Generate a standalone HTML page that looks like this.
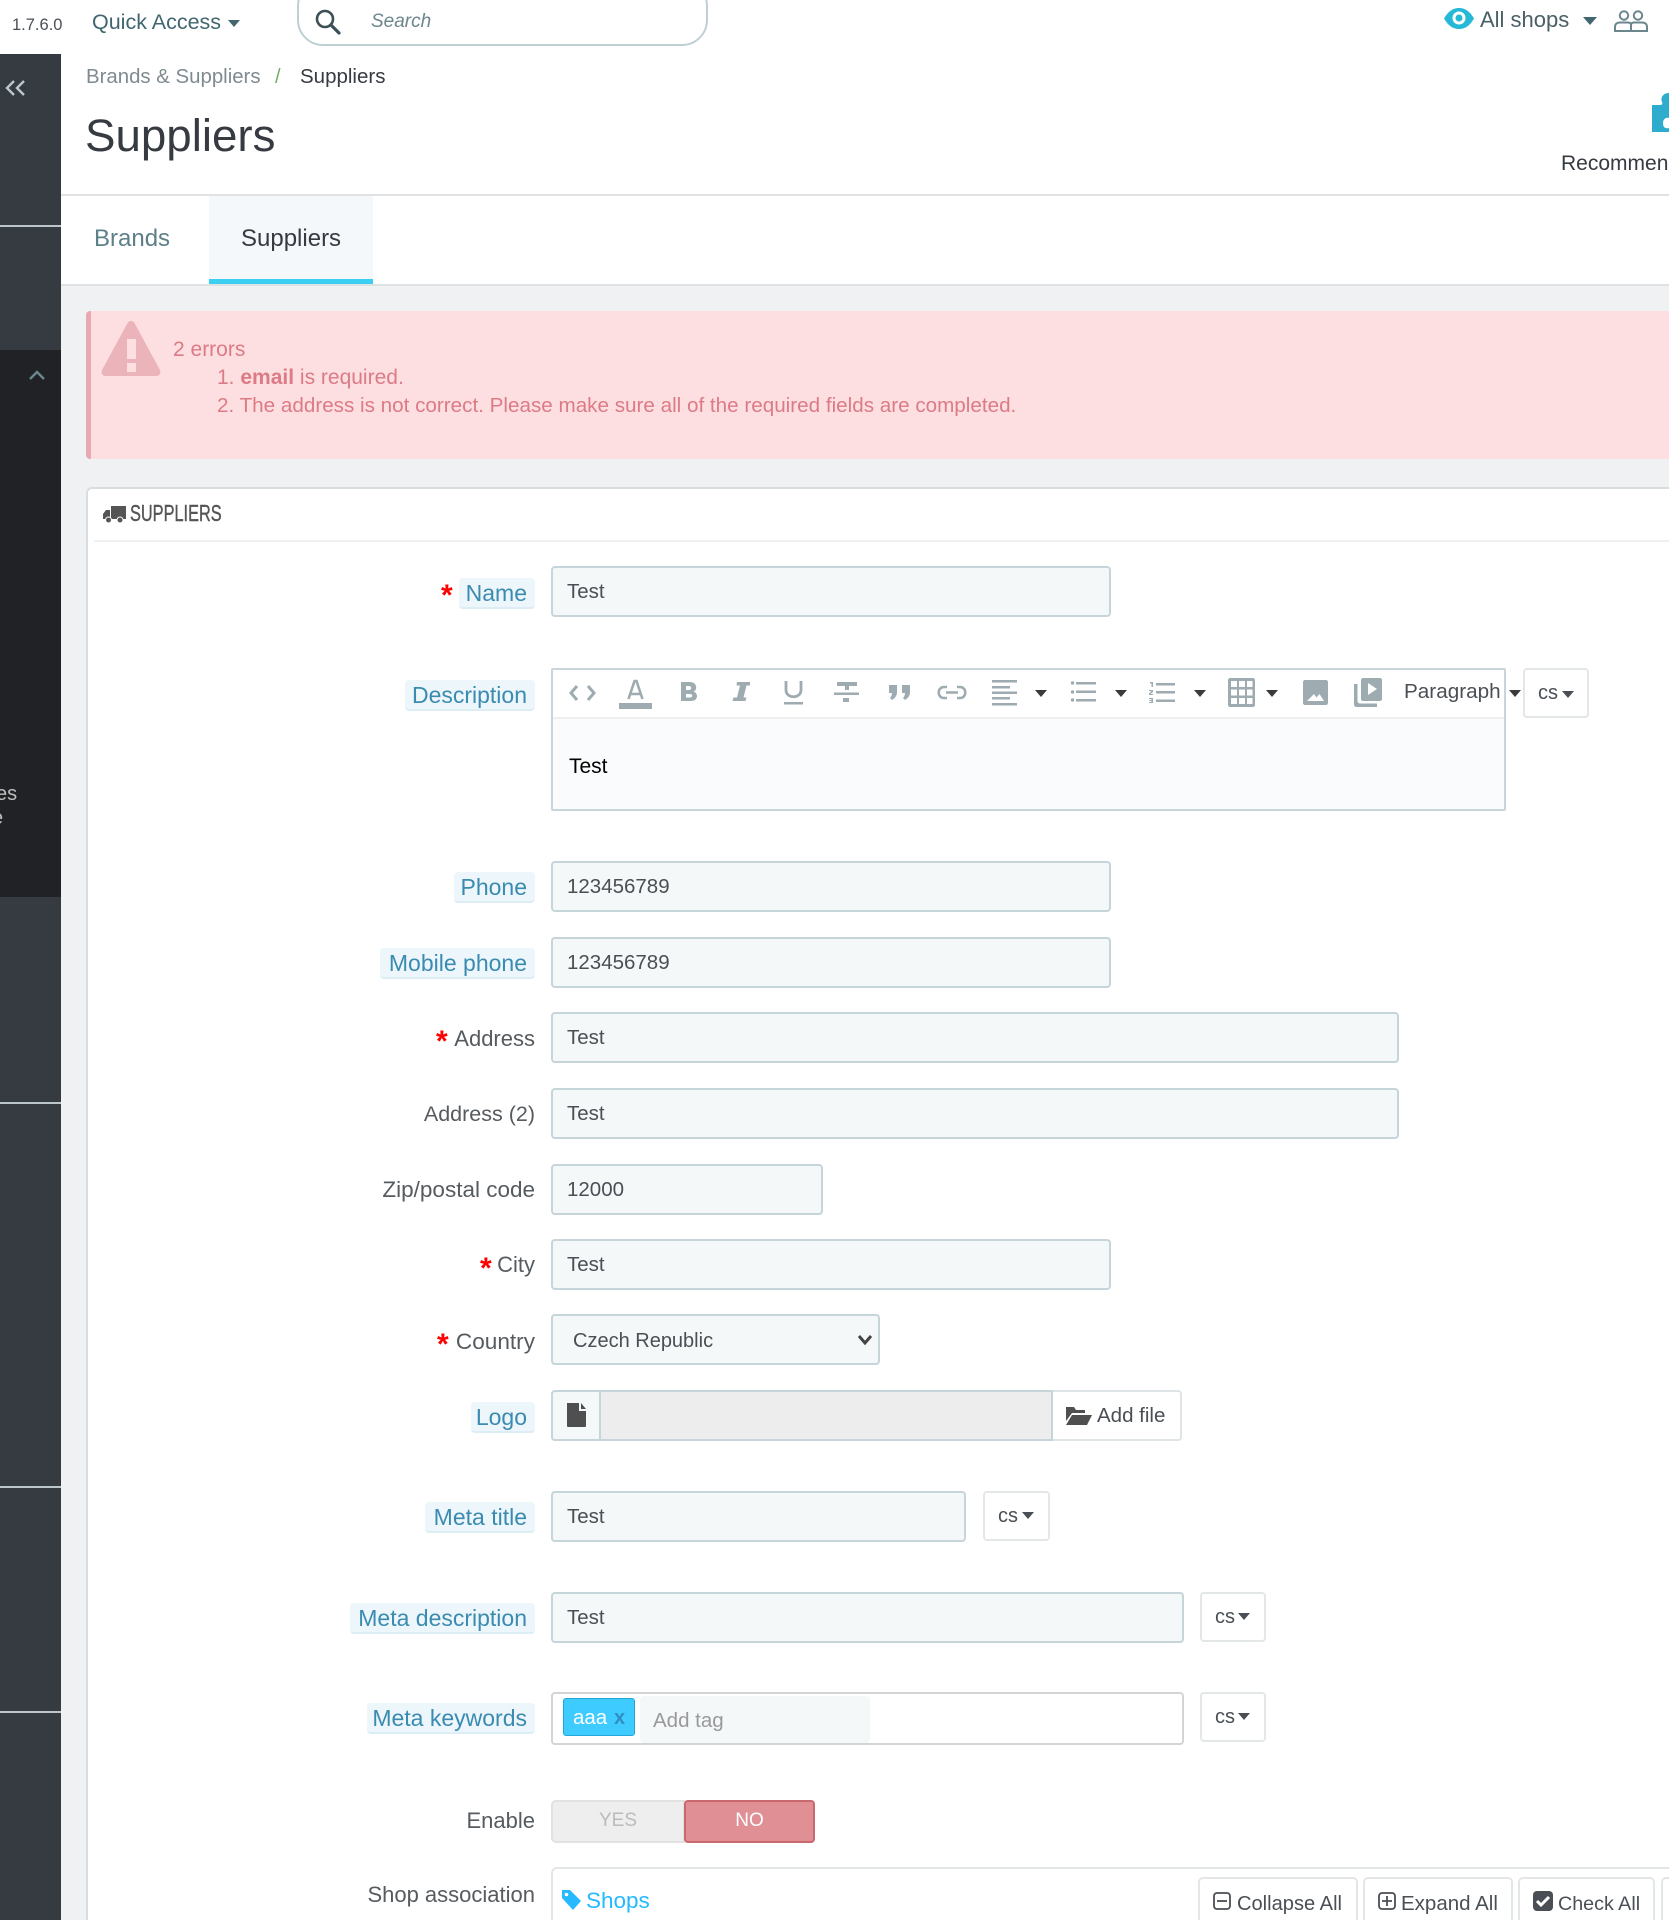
<!DOCTYPE html>
<html><head><meta charset="utf-8"><title>Suppliers</title>
<style>
html,body{margin:0;padding:0;background:#fff;width:1669px;height:1920px;overflow:hidden}
body{font-family:"Liberation Sans",sans-serif;color:#363a41}
#w{position:absolute;left:0;top:0;width:1669px;height:1920px;overflow:hidden;background:#fff}
#w div,svg.a{position:absolute;box-sizing:border-box}
#w .t{position:absolute;white-space:nowrap;line-height:30px;height:30px}
#w .inp{background:#f5f8f9;border:2px solid #c6d5da;border-radius:4px;font-size:20.5px;color:#4a4f55;padding-left:14px;line-height:48px;height:51px;white-space:nowrap}
#w .pill{background:#ecf6fb;border-bottom:2px solid #dcedf5;border-radius:4px;height:31px;line-height:30px;font-size:23px;color:#3b8bb1;text-align:right;padding-right:8px;white-space:nowrap}
#w .lab{right:1134px;font-size:22px;color:#565b60;line-height:30px;height:30px;white-space:nowrap}
#w .star{color:#f00;font-size:30px;font-weight:bold;line-height:30px;height:30px}
#w .cs{background:#fff;border:2px solid #e4e7e8;border-radius:4px;height:50px;font-size:20px;color:#4a4f55;line-height:46px;white-space:nowrap}
#w .car{width:0;height:0;border-left:6.5px solid transparent;border-right:6.5px solid transparent;border-top:7px solid #4a4f55}
#w .sl{left:0;width:61px;height:2px;background:#bcc6ca}
#w .btn{background:#fff;border:2px solid #e3e6e7;border-radius:5px;top:1877px;height:60px;font-size:20.1px;color:#4a4f55;line-height:50px;white-space:nowrap}
</style></head><body><div id="w">

<!-- top bar -->
<div class="t" style="left:12px;top:10px;font-size:16.5px;color:#4a4f55">1.7.6.0</div>
<div class="t" style="left:92px;top:7px;font-size:21.5px;color:#41666f">Quick Access</div>
<div class="car" style="left:228px;top:20px;border-top-color:#41666f"></div>
<div style="left:297px;top:-20px;width:411px;height:66px;border:2px solid #bfd0d5;border-radius:26px;background:#fff"></div>
<svg class="a" style="left:313px;top:8px" width="28" height="28" viewBox="0 0 28 28"><circle cx="12" cy="11" r="8" fill="none" stroke="#3d5057" stroke-width="2.6"/><path d="M18 17l8 8" stroke="#3d5057" stroke-width="3.2" stroke-linecap="round"/></svg>
<div class="t" style="left:371px;top:7px;font-size:19px;font-style:italic;color:#6c868e">Search</div>

<svg class="a" style="left:1443px;top:7px" width="32" height="23" viewBox="0 0 32 23"><path d="M1 11.5C6 3 11 1 16 1s10 2 15 10.500C26 20 21 22 16 22S6 20 1 11.500z" fill="#25b9d7"/><circle cx="16" cy="11" r="6.500" fill="#fff"/><circle cx="16" cy="11" r="3.500" fill="#25b9d7"/></svg>
<div class="t" style="left:1480px;top:5px;font-size:22px;color:#4a5f66">All shops</div>
<div class="car" style="left:1583px;top:17px;border-left-width:7px;border-right-width:7px;border-top-width:8px;border-top-color:#41666f"></div>
<svg class="a" style="left:1613px;top:9px" width="36" height="24" viewBox="0 0 36 24" fill="none" stroke="#6c868e" stroke-width="2"><circle cx="11" cy="6.500" r="4.200"/><circle cx="25" cy="6.500" r="4.200"/><path d="M2 22v-4c0-3 2-4.500 5-4.500h8c2 0 3 1 3 2.500 0-1.500 1-2.500 3-2.500h8c3 0 5 1.500 5 4.500v4zM18 16v6"/></svg>

<!-- sidebar -->
<div style="left:0;top:54px;width:61px;height:1866px;background:#363a41"></div>
<div style="left:0;top:350px;width:61px;height:547px;background:#202226"></div>
<div class="sl" style="top:225px"></div>
<div class="sl" style="top:1102px"></div>
<div class="sl" style="top:1486px"></div>
<div class="sl" style="top:1711px"></div>
<svg class="a" style="left:3px;top:78px" width="24" height="20" viewBox="0 0 24 20" fill="none" stroke="#bcc8cc" stroke-width="2.4"><path d="M11 3l-7 7 7 7M21 3l-7 7 7 7"/></svg>
<svg class="a" style="left:28px;top:368px" width="18" height="14" viewBox="0 0 18 14" fill="none" stroke="#6c868e" stroke-width="2.4"><path d="M2 11l7-7 7 7"/></svg>
<div class="t" style="left:-4px;top:779px;font-size:20px;color:#bebebe">es</div>
<div class="t" style="left:-8px;top:803px;font-size:20px;color:#bebebe">e</div>

<!-- header -->
<div class="t" style="left:86px;top:62px;font-size:20.4px;color:#7f8b90">Brands &amp; Suppliers</div>
<div class="t" style="left:275px;top:62px;font-size:20px;color:#70b060">/</div>
<div class="t" style="left:300px;top:62px;font-size:20.5px;color:#363a41">Suppliers</div>
<div class="t" style="left:85px;top:116px;font-size:45.7px;line-height:40px;height:40px;color:#363a41">Suppliers</div>
<svg class="a" style="left:1652px;top:91px" width="17" height="42" viewBox="0 0 17 42"><path d="M0 14H8C10 14 11 13 10 11C8 7 11 2 17 2V27C13 26 11 29 11 32C11 36 13 38 17 37V41H0Z" fill="#2eacce"/></svg>
<div class="t" style="left:1561px;top:149px;font-size:21px;color:#363a41">Recommended</div>
<div style="left:61px;top:194px;width:1608px;height:2px;background:#dfe1e2"></div>

<!-- tabs -->
<div style="left:209px;top:196px;width:164px;height:88px;background:#f4f8fb;border-bottom:5px solid #3bd0f2"></div>
<div class="t" style="left:94px;top:224px;font-size:24px;color:#5d8088">Brands</div>
<div class="t" style="left:241px;top:224px;font-size:24px;color:#363a41">Suppliers</div>

<!-- content bg -->
<div style="left:61px;top:284px;width:1608px;height:1636px;background:#eff1f2;border-top:2px solid #dfe1e2"></div>

<!-- alert -->
<div style="left:86px;top:311px;width:1600px;height:148px;background:#fddfe2;border-left:5px solid #e8aab0;border-radius:4px"></div>
<svg class="a" style="left:101px;top:320px" width="60" height="57" viewBox="0 0 60 57"><path d="M30 1C32 1 33 2 34 4L59 50c1 3 0 6-4 6H5c-4 0-5-3-4-6L26 4c1-2 2-3 4-3z" fill="#ebb4ba"/><rect x="26" y="19" width="9" height="20" fill="#fddfe2"/><rect x="26" y="43" width="9" height="9" fill="#fddfe2"/></svg>
<div class="t" style="left:173px;top:335px;font-size:21px;color:#dc7b85">2 errors</div>
<div class="t" style="left:217px;top:363px;font-size:21px;color:#dc7b85">1. <b>email</b> is required.</div>
<div class="t" style="left:217px;top:391px;font-size:20.65px;color:#dc7b85">2. The address is not correct. Please make sure all of the required fields are completed.</div>

<!-- panel -->
<div style="left:86px;top:487px;width:1600px;height:1460px;background:#fff;border:2px solid #d8dee0;border-radius:6px"></div>
<div style="left:94px;top:540px;width:1575px;height:2px;background:#eef0f1"></div>
<svg class="a" style="left:103px;top:505px" width="23" height="19" viewBox="0 0 23 19" fill="#555"><path d="M8 1h15v13H8zM7 5v9H0V9l3-4z"/><circle cx="5.500" cy="15" r="3" stroke="#fff"/><circle cx="17" cy="15" r="3" stroke="#fff"/></svg>
<div class="t" style="left:130px;top:498px;font-size:23px;color:#555;-webkit-text-stroke:.4px #555;transform:scaleX(.71);transform-origin:0 0">SUPPLIERS</div>

<!-- Name -->
<div class="star" style="left:441px;top:581px">*</div>
<div class="pill" style="left:459px;top:578px;width:76px">Name</div>
<div class="inp" style="left:551px;top:566px;width:560px">Test</div>

<!-- Description -->
<div class="pill" style="left:405px;top:680px;width:130px">Description</div>
<div style="left:551px;top:668px;width:955px;height:143px;background:#f9fbfc;border:2px solid #c8d6db;border-radius:2px"></div>
<div style="left:553px;top:670px;width:951px;height:49px;background:#fff;border-bottom:2px solid #eceeef"></div>
<svg class="a" style="left:553px;top:670px" width="970" height="48" viewBox="553 670 970 48" fill="#9eabb0" stroke="none">
 <path d="M577 686l-6 7 6 7M588 686l6 7-6 7" fill="none" stroke="#9eabb0" stroke-width="3"/>
 <path d="M628.500 699l6-18h2l6 18M631 694h9" fill="none" stroke="#9eabb0" stroke-width="2.600"/><rect x="619" y="703" width="33" height="6"/>
 <path d="M681 682h9c7 0 8 8 3.500 9.500 5 1.500 5 9.500-2.500 9.500h-10zM686 686v4h3c3 0 3-4 0-4zM686 694v3.500h4c3 0 3-3.500 0-3.500z" fill-rule="evenodd"/>
 <path d="M737 682h13v3.500h-3.500l-3 12h3l-1 3.500h-13l1-3.500h3.500l3-12h-3.500z"/>
 <path d="M786 681v9c0 9 15 9 15 0v-9" fill="none" stroke="#9eabb0" stroke-width="2.800"/><rect x="784" y="702" width="19" height="2.500"/>
 <path d="M837 682h20v4h-8v4h-4v-4h-8zM834 692.500h25v2.500h-25zM843 698h6v4h-6z"/>
 <path d="M889 685h8v7c0 4-2 6-5 8l-2-2c1-1 2-3 2-5h-3zM902 685h8v7c0 4-2 6-5 8l-2-2c1-1 2-3 2-5h-3z"/>
 <path d="M947 687h-3c-7 0-7 11 0 11h3M957 687h3c7 0 7 11 0 11h-3M946 692.500h12" fill="none" stroke="#9eabb0" stroke-width="2.600"/>
 <path d="M992 680h25v2.500h-25zM992 686h18v2.500h-18zM992 691.500h25v2.500h-25zM992 697h18v2.500h-18zM992 703h25v2.500h-25z"/>
 <path d="M1076 682h20v2.500h-20zM1076 690.500h20v2.500h-20zM1076 699h20v2.500h-20z"/><circle cx="1072.500" cy="683" r="1.700"/><circle cx="1072.500" cy="692" r="1.700"/><circle cx="1072.500" cy="700" r="1.700"/>
 <path d="M1156 683h19v2.500h-19zM1156 691h19v2.500h-19zM1156 699.500h19v2.500h-19zM1150 682h3v5h-1.500v-3.500h-1.500zM1149 690h4v2l-2.500 2h2.500v1h-4v-1.500l2.500-2.500h-2.500zM1149 698h4v5h-4v-1h2.500v-1h-2v-1h2v-1h-2.500z"/>
 <path fill-rule="evenodd" d="M1230 678h23c1 0 2 1 2 2v25c0 1-1 2-2 2h-23c-1 0-2-1-2-2v-25c0-1 1-2 2-2zM1231 681v6h6v-6zM1239 681v6h6v-6zM1247 681v6h5.500v-6zM1231 689.500v6h6v-6zM1239 689.500v6h6v-6zM1247 689.500v6h5.500v-6zM1231 698v6h6v-6zM1239 698v6h6v-6zM1247 698v6h5.500v-6z"/>
 <path fill-rule="evenodd" d="M1305 680h21c1 0 2 1 2 2v21c0 1-1 2-2 2h-21c-1 0-2-1-2-2v-21c0-1 1-2 2-2zM1307 701h17l-4.500-7-3 3.500-2.500-3.500z"/>
 <path fill-rule="evenodd" d="M1363 678h17c1 0 2 1 2 2v19c0 1-1 2-2 2h-17c-1 0-2-1-2-2v-19c0-1 1-2 2-2zM1368 683v12l9-6z"/>
 <path d="M1354 684h3.500v17c0 1 1 2.500 2.500 2.500h17v3.500h-20c-2 0-3-1-3-3z"/>
</svg>
<div class="car" style="left:1035px;top:690px;border-top-color:#3a3a3a"></div>
<div class="car" style="left:1114.500px;top:690px;border-top-color:#3a3a3a"></div>
<div class="car" style="left:1193.500px;top:690px;border-top-color:#3a3a3a"></div>
<div class="car" style="left:1266px;top:690px;border-top-color:#3a3a3a"></div>
<div class="t" style="left:1404px;top:677px;font-size:20.7px;color:#4a4f55">Paragraph</div>
<div class="car" style="left:1509px;top:690px;border-top-color:#3a3a3a"></div>
<div class="cs" style="left:1523px;top:668px;width:66px;padding-left:13px">cs</div>
<div class="car" style="left:1562px;top:691px"></div>
<div class="t" style="left:569px;top:752px;font-size:21px;color:#000">Test</div>

<!-- Phone -->
<div class="pill" style="left:454px;top:872px;width:81px">Phone</div>
<div class="inp" style="left:551px;top:861px;width:560px">123456789</div>
<div class="pill" style="left:380px;top:948px;width:155px">Mobile phone</div>
<div class="inp" style="left:551px;top:937px;width:560px">123456789</div>

<!-- Address -->
<div class="star" style="left:436px;top:1027px">*</div>
<div class="lab" style="top:1024px">Address</div>
<div class="inp" style="left:551px;top:1012px;width:848px">Test</div>
<div class="lab" style="top:1099px;font-size:21.5px">Address (2)</div>
<div class="inp" style="left:551px;top:1088px;width:848px">Test</div>
<div class="lab" style="top:1175px;font-size:22.5px">Zip/postal code</div>
<div class="inp" style="left:551px;top:1164px;width:272px">12000</div>
<div class="star" style="left:480px;top:1254px">*</div>
<div class="lab" style="top:1250px">City</div>
<div class="inp" style="left:551px;top:1239px;width:560px">Test</div>

<!-- Country -->
<div class="star" style="left:437px;top:1330px">*</div>
<div class="lab" style="top:1327px;font-size:22.6px">Country</div>
<div class="inp" style="left:551px;top:1314px;width:329px;padding-left:20px;line-height:51px;font-size:20px">Czech Republic</div>
<svg class="a" style="left:857px;top:1334px" width="16" height="12" viewBox="0 0 16 12" fill="none" stroke="#444" stroke-width="3"><path d="M2 2l6 7 6-7"/></svg>

<!-- Logo -->
<div class="pill" style="left:471px;top:1402px;width:64px">Logo</div>
<div style="left:551px;top:1390px;width:631px;height:51px;background:#fff;border:2px solid #dfe4e6;border-radius:4px"></div>
<div style="left:551px;top:1390px;width:50px;height:51px;background:#f5f8f9;border:2px solid #c6d5da;border-radius:4px 0 0 4px"></div>
<div style="left:600px;top:1390px;width:453px;height:51px;background:#ededed;border:2px solid #c6d5da;border-left-width:1px"></div>
<svg class="a" style="left:566px;top:1403px" width="21" height="24" viewBox="0 0 21 24" fill="#4f4f4f"><path d="M1 0h12v8h7v15c0 .5-.5 1-1 1H2c-.5 0-1-.5-1-1zM15 0l5 6h-5z"/></svg>
<svg class="a" style="left:1066px;top:1405px" width="26" height="20" viewBox="0 0 26 20" fill="#4f4f4f"><path d="M0 2h8l2 3h9v3H6L0 16zM6 10h20l-5 10H0z"/></svg>
<div class="t" style="left:1097px;top:1401px;font-size:20.5px;color:#4a4f55">Add file</div>

<!-- Meta title -->
<div class="pill" style="left:425px;top:1502px;width:110px">Meta title</div>
<div class="inp" style="left:551px;top:1491px;width:415px">Test</div>
<div class="cs" style="left:983px;top:1491px;width:67px;padding-left:13px">cs</div>
<div class="car" style="left:1022px;top:1512px"></div>

<!-- Meta description -->
<div class="pill" style="left:350px;top:1603px;width:185px">Meta description</div>
<div class="inp" style="left:551px;top:1592px;width:633px">Test</div>
<div class="cs" style="left:1200px;top:1592px;width:66px;padding-left:13px">cs</div>
<div class="car" style="left:1238px;top:1613px"></div>

<!-- Meta keywords -->
<div class="pill" style="left:367px;top:1703px;width:168px">Meta keywords</div>
<div style="left:551px;top:1692px;width:633px;height:53px;background:#fff;border:2px solid #d2d4d6;border-radius:4px"></div>
<div style="left:640px;top:1696px;width:230px;height:47px;background:#f4f8f9;border-radius:4px"></div>
<div style="left:563px;top:1698px;width:72px;height:38px;background:#3ecbff;border:1px solid #25a6d8;border-radius:3px"></div>
<div class="t" style="left:573px;top:1703px;font-size:20.5px;color:#fff">aaa</div>
<div class="t" style="left:614px;top:1703px;font-size:20px;font-weight:bold;color:#2f8fc0">x</div>
<div class="t" style="left:653px;top:1706px;font-size:20.5px;color:#999">Add tag</div>
<div class="cs" style="left:1200px;top:1692px;width:66px;padding-left:13px">cs</div>
<div class="car" style="left:1238px;top:1713px"></div>

<!-- Enable -->
<div class="lab" style="top:1806px">Enable</div>
<div style="left:551px;top:1800px;width:134px;height:43px;background:#eee;border:2px solid #e2e2e2;border-radius:5px 0 0 5px;text-align:center;font-size:19px;line-height:37px;color:#bbb">YES</div>
<div style="left:684px;top:1800px;width:131px;height:43px;background:#e08f95;border:2px solid #c9686f;border-radius:4px;text-align:center;font-size:19px;line-height:38px;color:#fff">NO</div>

<!-- Shop association -->
<div class="lab" style="top:1880px">Shop association</div>
<div style="left:551px;top:1867px;width:1140px;height:80px;background:#fff;border:2px solid #e3e6e7;border-radius:6px"></div>
<svg class="a" style="left:562px;top:1889px" width="19" height="21" viewBox="0 0 19 21"><path d="M0 1h8l11 11-8 9L0 9z" fill="#25b9ff"/><circle cx="4.500" cy="5.500" r="1.800" fill="#fff"/></svg>
<div class="t" style="left:586px;top:1886px;font-size:22.5px;color:#25b9ff">Shops</div>
<div class="btn" style="left:1198px;width:160px;padding-left:37px">Collapse All</div>
<svg class="a" style="left:1213px;top:1892px" width="18" height="18" viewBox="0 0 18 18" fill="none" stroke="#4a4f55" stroke-width="1.800"><rect x="1" y="1" width="16" height="16" rx="3"/><path d="M4 9h10"/></svg>
<div class="btn" style="left:1363px;width:150px;padding-left:36px;font-size:20.5px">Expand All</div>
<svg class="a" style="left:1378px;top:1892px" width="18" height="18" viewBox="0 0 18 18" fill="none" stroke="#4a4f55" stroke-width="1.800"><rect x="1" y="1" width="16" height="16" rx="3"/><path d="M4 9h10M9 4v10"/></svg>
<div class="btn" style="left:1518px;width:137px;padding-left:38px;font-size:19.7px">Check All</div>
<svg class="a" style="left:1533px;top:1891px" width="20" height="20" viewBox="0 0 20 20"><rect width="20" height="20" rx="4" fill="#4a4f55"/><path d="M4 10l4 4 8-8" fill="none" stroke="#fff" stroke-width="3"/></svg>
<div class="btn" style="left:1661px;width:60px"></div>

</div></body></html>
